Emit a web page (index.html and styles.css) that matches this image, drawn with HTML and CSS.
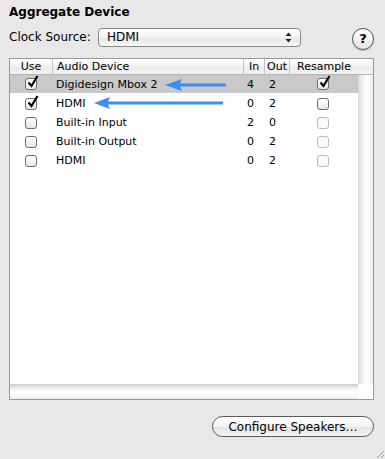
FILE: index.html
```html
<!DOCTYPE html>
<html>
<head>
    <title>Aggregate Device</title>
    <link rel="stylesheet" href="styles.css">
</head>
<body>
    <div class="panel">
        <h1 class="title">Aggregate Device</h1>
        <div class="clock">
            <span class="clock-label">Clock Source:</span>
            <div class="popup">
                <span>HDMI</span>
                <svg class="stepper" width="7" height="11" viewBox="0 0 7 11"><path d="M3.5 0.5 L6.5 4 L0.5 4 Z M0.5 7 L6.5 7 L3.5 10.5 Z" fill="#222"/></svg>
            </div>
            <div class="help">?</div>
        </div>

        <div class="devices">
            <div class="head">
                <div class="col-use">Use</div>
                <div class="col-name">Audio Device</div>
                <div class="col-in">In</div>
                <div class="col-out">Out</div>
                <div class="col-res">Resample</div>
            </div>
            <div class="head-corner"></div>
            <div class="rows">
                <div class="row selected">
                    <div class="col-use"><span class="check on"></span></div>
                    <div class="col-name">Digidesign Mbox 2</div>
                    <div class="col-in">4</div>
                    <div class="col-out">2</div>
                    <div class="col-res"><span class="check on"></span></div>
                </div>
                <div class="row">
                    <div class="col-use"><span class="check on"></span></div>
                    <div class="col-name">HDMI</div>
                    <div class="col-in">0</div>
                    <div class="col-out">2</div>
                    <div class="col-res"><span class="check"></span></div>
                </div>
                <div class="row">
                    <div class="col-use"><span class="check"></span></div>
                    <div class="col-name">Built-in Input</div>
                    <div class="col-in">2</div>
                    <div class="col-out">0</div>
                    <div class="col-res"><span class="check off"></span></div>
                </div>
                <div class="row">
                    <div class="col-use"><span class="check"></span></div>
                    <div class="col-name">Built-in Output</div>
                    <div class="col-in">0</div>
                    <div class="col-out">2</div>
                    <div class="col-res"><span class="check off"></span></div>
                </div>
                <div class="row">
                    <div class="col-use"><span class="check"></span></div>
                    <div class="col-name">HDMI</div>
                    <div class="col-in">0</div>
                    <div class="col-out">2</div>
                    <div class="col-res"><span class="check off"></span></div>
                </div>
            </div>
            <div class="vscroll"></div>
            <div class="hscroll"></div>
            <div class="corner"></div>
        </div>

        <div class="actions">
            <button class="speakers">Configure Speakers…</button>
        </div>
    </div>

    <!-- annotation arrows drawn over the list -->
    <svg class="arrows" width="385" height="459" viewBox="0 0 385 459">
        <g fill="#3d8df2" stroke="#3d8df2">
            <path d="M165 85 L182 79 Q178 85 182 91 Z" stroke="none"/>
            <line x1="178" y1="85" x2="226" y2="85" stroke-width="3"/>
            <path d="M94 103 L110 97 Q106 103 110 109 Z" stroke="none"/>
            <line x1="106" y1="103" x2="223" y2="103" stroke-width="3"/>
        </g>
    </svg>
    <svg class="grip" width="8" height="8" viewBox="0 0 8 8"><path d="M1 8 L8 1 M5 8 L8 5" stroke="#999" stroke-width="1"/></svg>
</body>
</html>
```

FILE: styles.css
```css
body {
    margin: 0;
    width: 385px;
    height: 459px;
    background: #e8e8e8;
    font-family: "DejaVu Sans", "Liberation Sans", sans-serif;
    color: #000;
    overflow: hidden;
    position: relative;
}
.panel {
    padding: 4px 11px 0 9px;
}
.title {
    margin: 0;
    font-size: 12px;
    font-weight: bold;
    line-height: 16px;
}
.clock {
    display: flex;
    align-items: center;
    margin-top: 7px;
    height: 20px;
}
.clock-label {
    font-size: 12px;
    width: 89px;
}
.popup {
    width: 185px;
    height: 17px;
    border: 1px solid #8a8a8a;
    border-radius: 4px;
    background: linear-gradient(#ffffff, #f2f2f2 50%, #e6e6e6 51%, #f6f6f6);
    display: flex;
    align-items: center;
    justify-content: space-between;
    padding: 0 8px 0 8px;
    box-sizing: content-box;
    font-size: 12px;
}
.help {
    margin-left: auto;
    margin-top: 3px;
    width: 20px;
    height: 20px;
    border-radius: 50%;
    border: 1px solid #555;
    background: linear-gradient(#ffffff, #e4e4e4);
    font-size: 13px;
    font-weight: bold;
    text-align: center;
    line-height: 20px;
    box-shadow: 0 1px 1px rgba(0,0,0,0.2);
}
.devices {
    margin-top: 11px;
    width: 363px;
    height: 340px;
    border: 1px solid #9a9a9a;
    background: #fff;
    display: grid;
    grid-template-columns: 348px 15px;
    grid-template-rows: 16px 1fr 15px;
    font-size: 11px;
}
.head, .row {
    display: flex;
}
.head {
    background: linear-gradient(#ffffff, #f1f1f1 50%, #e9e9e9 51%, #f3f3f3);
    border-bottom: 1px solid #b5b5b5;
    line-height: 15px;
}
.head > div {
    border-right: 1px solid #c4c4c4;
}
.head-corner {
    background: linear-gradient(#ffffff, #f1f1f1 50%, #e9e9e9 51%, #f3f3f3);
    border-bottom: 1px solid #b5b5b5;
}
.col-use { width: 42px; text-align: center; flex: none; }
.col-name { width: 191px; padding-left: 4px; box-sizing: border-box; flex: none; }
.col-in { width: 21px; padding-left: 4px; box-sizing: border-box; flex: none; }
.col-out { width: 25px; padding-left: 5px; box-sizing: border-box; flex: none; }
.col-res { width: 68px; text-align: center; flex: none; }
.head .col-in, .head .col-out { text-align: center; padding-left: 0; }
.head .col-res { border-right: none; }
.row {
    height: 19px;
    align-items: center;
}
.row.selected {
    background: #c9c9c9;
    height: 18px;
    margin-bottom: 1px;
}
.row .col-use, .row .col-res {
    display: flex;
    justify-content: center;
}
.check {
    width: 10px;
    height: 10px;
    border: 1px solid #6e6e6e;
    border-radius: 3px;
    background: linear-gradient(#ffffff, #e8e8e8);
    position: relative;
}
.check.off {
    border-color: #bdbdbd;
    background: #fafafa;
}
.check.on::after {
    content: "";
    position: absolute;
    left: 1px;
    top: -4px;
    width: 12px;
    height: 13px;
    background: url("data:image/svg+xml;utf8,<svg xmlns='http://www.w3.org/2000/svg' width='12' height='13' viewBox='0 0 12 13'><path d='M1.5 7.5 L4.5 11 L10.5 1' fill='none' stroke='black' stroke-width='2.2'/></svg>") no-repeat;
}
.vscroll {
    background: linear-gradient(90deg, #e2e2e2, #f8f8f8 40%, #ffffff 60%, #e9e9e9);
    border-left: 1px solid #d8d8d8;
}
.hscroll {
    background: linear-gradient(#d6d6d6, #f6f6f6 30%, #ffffff 60%, #ececec);
    border-top: 1px solid #cfcfcf;
}
.corner {
    background: #fff;
}
.actions {
    display: flex;
    justify-content: flex-end;
    margin-top: 16px;
}
.speakers {
    width: 162px;
    height: 21px;
    border: 1px solid #5a5a5a;
    border-radius: 11px;
    background: linear-gradient(#ffffff, #f3f3f3 50%, #e4e4e4 51%, #f4f4f4);
    font-family: "DejaVu Sans", "Liberation Sans", sans-serif;
    font-size: 12px;
    padding: 0;
    color: #000;
}
.arrows {
    position: absolute;
    left: 0;
    top: 0;
    pointer-events: none;
}
.grip {
    position: absolute;
    right: 1px;
    bottom: 1px;
}
```
